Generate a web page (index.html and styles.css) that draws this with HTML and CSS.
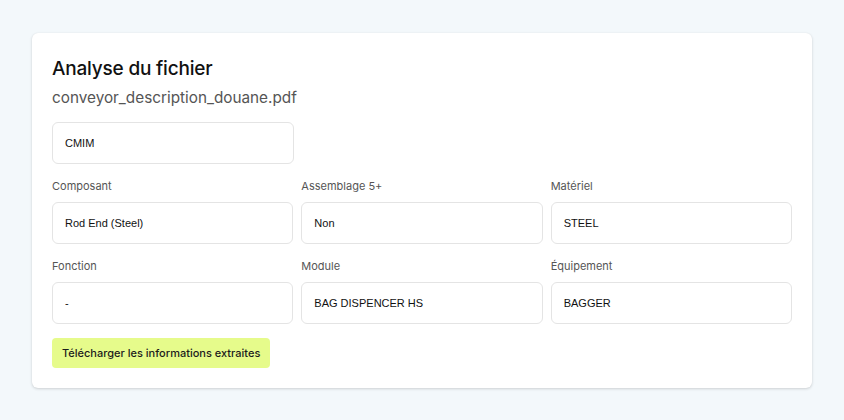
FILE: index.html
```html
<!DOCTYPE html>
<html lang="fr">
<head>
  <meta charset="UTF-8">
  <title>Analyse du fichier</title>
  <link rel="stylesheet" href="styles.css">
</head>
<body>

  <div class="card">
    <h2>Analyse du fichier</h2>
    <p class="filename">conveyor_description_douane.pdf</p>

    <input class="field single" type="text" value="CMIM" readonly />

    <div class="grid">
      <div class="item">
        <label>Composant</label>
        <input class="field" type="text" value="Rod End (Steel)" readonly />
      </div>
      <div class="item">
        <label>Assemblage 5+</label>
        <input class="field" type="text" value="Non" readonly />
      </div>
      <div class="item">
        <label>Matériel</label>
        <input class="field" type="text" value="STEEL" readonly />
      </div>
      <div class="item">
        <label>Fonction</label>
        <input class="field" type="text" value="-" readonly />
      </div>
      <div class="item">
        <label>Module</label>
        <input class="field" type="text" value="BAG DISPENCER HS" readonly />
      </div>
      <div class="item">
        <label>Équipement</label>
        <input class="field" type="text" value="BAGGER" readonly />
      </div>
    </div>

    <button type="button">Télécharger les informations extraites</button>
  </div>

</body>
</html>
```

FILE: styles.css
```css
body { margin: 0; padding: 33px 32px; background: #f3f8fb; font-family: Inter, "Noto Sans", sans-serif; }
.card { width: 740px; background: white; padding: 22px 20px 20px; border-radius: 6px; box-shadow: 0 1px 3px rgba(0,0,0,0.16), 0 0 1px rgba(0,0,0,0.06); }
h2 { margin: 0; font-size: 19px; line-height: 28px; font-weight: 500; color: #111; letter-spacing: -0.2px; }
.filename { margin: 3px 0 0; font-size: 15.3px; line-height: 24px; color: #555; }
.field { box-sizing: border-box; width: 100%; height: 42px; padding: 0 12px; border: 1px solid #e4e4e4; border-radius: 6px; background: white; font-family: "Liberation Sans", Arial, sans-serif; font-size: 11px; color: #111; outline: none; }
.field.single { width: 242px; margin-top: 12px; display: block; }
.grid { display: grid; grid-template-columns: repeat(3, 1fr); gap: 14px 8px; margin-top: 14px; }
.item { display: flex; flex-direction: column; gap: 8px; }
label { font-size: 11px; line-height: 16px; color: #555; }
button { margin-top: 14px; height: 30px; padding: 0 10px; border: none; border-radius: 4px; background: #e6fb8b; color: #1c1c1c; font-family: Inter, sans-serif; font-size: 11px; font-weight: 500; cursor: pointer; }
```
